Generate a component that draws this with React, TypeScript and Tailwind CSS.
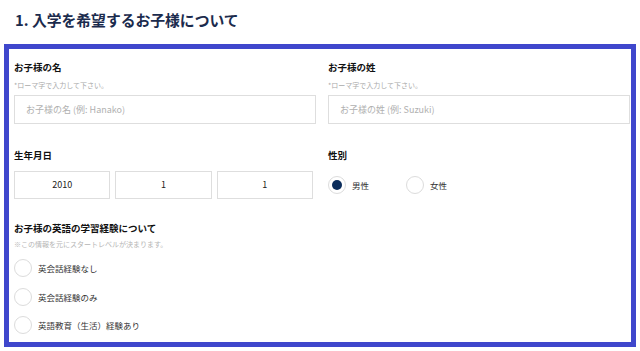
import { useState } from "react";

const font = { fontFamily: '"Noto Sans CJK JP", "Noto Sans", sans-serif' };

function Radio({ checked, label, onClick }: { checked: boolean; label: string; onClick?: () => void }) {
  return (
    <button type="button" onClick={onClick} className="flex items-center gap-[6px] text-left">
      <span className="flex h-[18px] w-[18px] shrink-0 items-center justify-center rounded-full border border-[#dcdcdc] bg-white">
        {checked && <span className="h-[10px] w-[10px] rounded-full bg-[#0c2d5c]" />}
      </span>
      <span className="text-[8.5px] leading-[12px] text-[#333]">{label}</span>
    </button>
  );
}

function Field({ label, placeholder }: { label: string; placeholder: string }) {
  return (
    <div className="flex flex-col">
      <div className="text-[9.5px] font-bold leading-[12px] text-[#111]">{label}</div>
      <div className="mt-[7px] text-[7px] leading-[10px] text-[#aaa]">*ローマ字で入力して下さい。</div>
      <input
        placeholder={placeholder}
        className="mt-[5px] h-[29px] w-full border border-[#dedede] bg-white px-[11px] text-[9px] text-[#333] outline-none placeholder:text-[#b0b0b0]"
      />
    </div>
  );
}

export default function App() {
  const [gender, setGender] = useState("male");
  const [exp, setExp] = useState("");

  const experiences = ["英会話経験なし", "英会話経験のみ", "英語教育（生活）経験あり"];

  return (
    <div className="h-[351px] w-[640px] overflow-hidden bg-white pt-[10px]" style={font}>
      <h2 className="pl-[15px] text-[14.8px] font-bold leading-[20px] text-[#1b2b4d]">
        1. 入学を希望するお子様について
      </h2>

      <div className="mx-[4px] mt-[14px] border-[5px] border-[#3f47cc] pb-[8px] pl-[5px] pr-[1px] pt-[12px]">
        {/* Names */}
        <div className="grid grid-cols-2 gap-[12px]">
          <Field label="お子様の名" placeholder="お子様の名 (例: Hanako)" />
          <Field label="お子様の姓" placeholder="お子様の姓 (例: Suzuki)" />
        </div>

        {/* Birthday / gender */}
        <div className="mt-[25px] grid grid-cols-2 gap-[12px]">
          <div className="flex flex-col">
            <div className="text-[9.5px] font-bold leading-[12px] text-[#111]">生年月日</div>
            <div className="mt-[10px] grid w-[299px] grid-cols-3 gap-[5px]">
              {["2010", "1", "1"].map((v, i) => (
                <div
                  key={i}
                  className="flex h-[28px] items-center justify-center border border-[#dedede] text-[9px] text-[#222]"
                >
                  {v}
                </div>
              ))}
            </div>
          </div>
          <div className="flex flex-col">
            <div className="text-[9.5px] font-bold leading-[12px] text-[#111]">性別</div>
            <div className="mt-[10px] flex h-[28px] items-center">
              <div className="w-[78px]">
                <Radio checked={gender === "male"} label="男性" onClick={() => setGender("male")} />
              </div>
              <Radio checked={gender === "female"} label="女性" onClick={() => setGender("female")} />
            </div>
          </div>
        </div>

        {/* English experience */}
        <div className="mt-[23px] flex flex-col">
          <div className="text-[9.5px] font-bold leading-[12px] text-[#111]">お子様の英語の学習経験について</div>
          <div className="mt-[5px] text-[7px] leading-[10px] text-[#b5b5b5]">※この情報を元にスタートレベルが決まります。</div>
          <div className="mt-[10px] flex flex-col gap-[10.5px]">
            {experiences.map((e) => (
              <Radio key={e} checked={exp === e} label={e} onClick={() => setExp(e)} />
            ))}
          </div>
        </div>
      </div>
    </div>
  );
}
